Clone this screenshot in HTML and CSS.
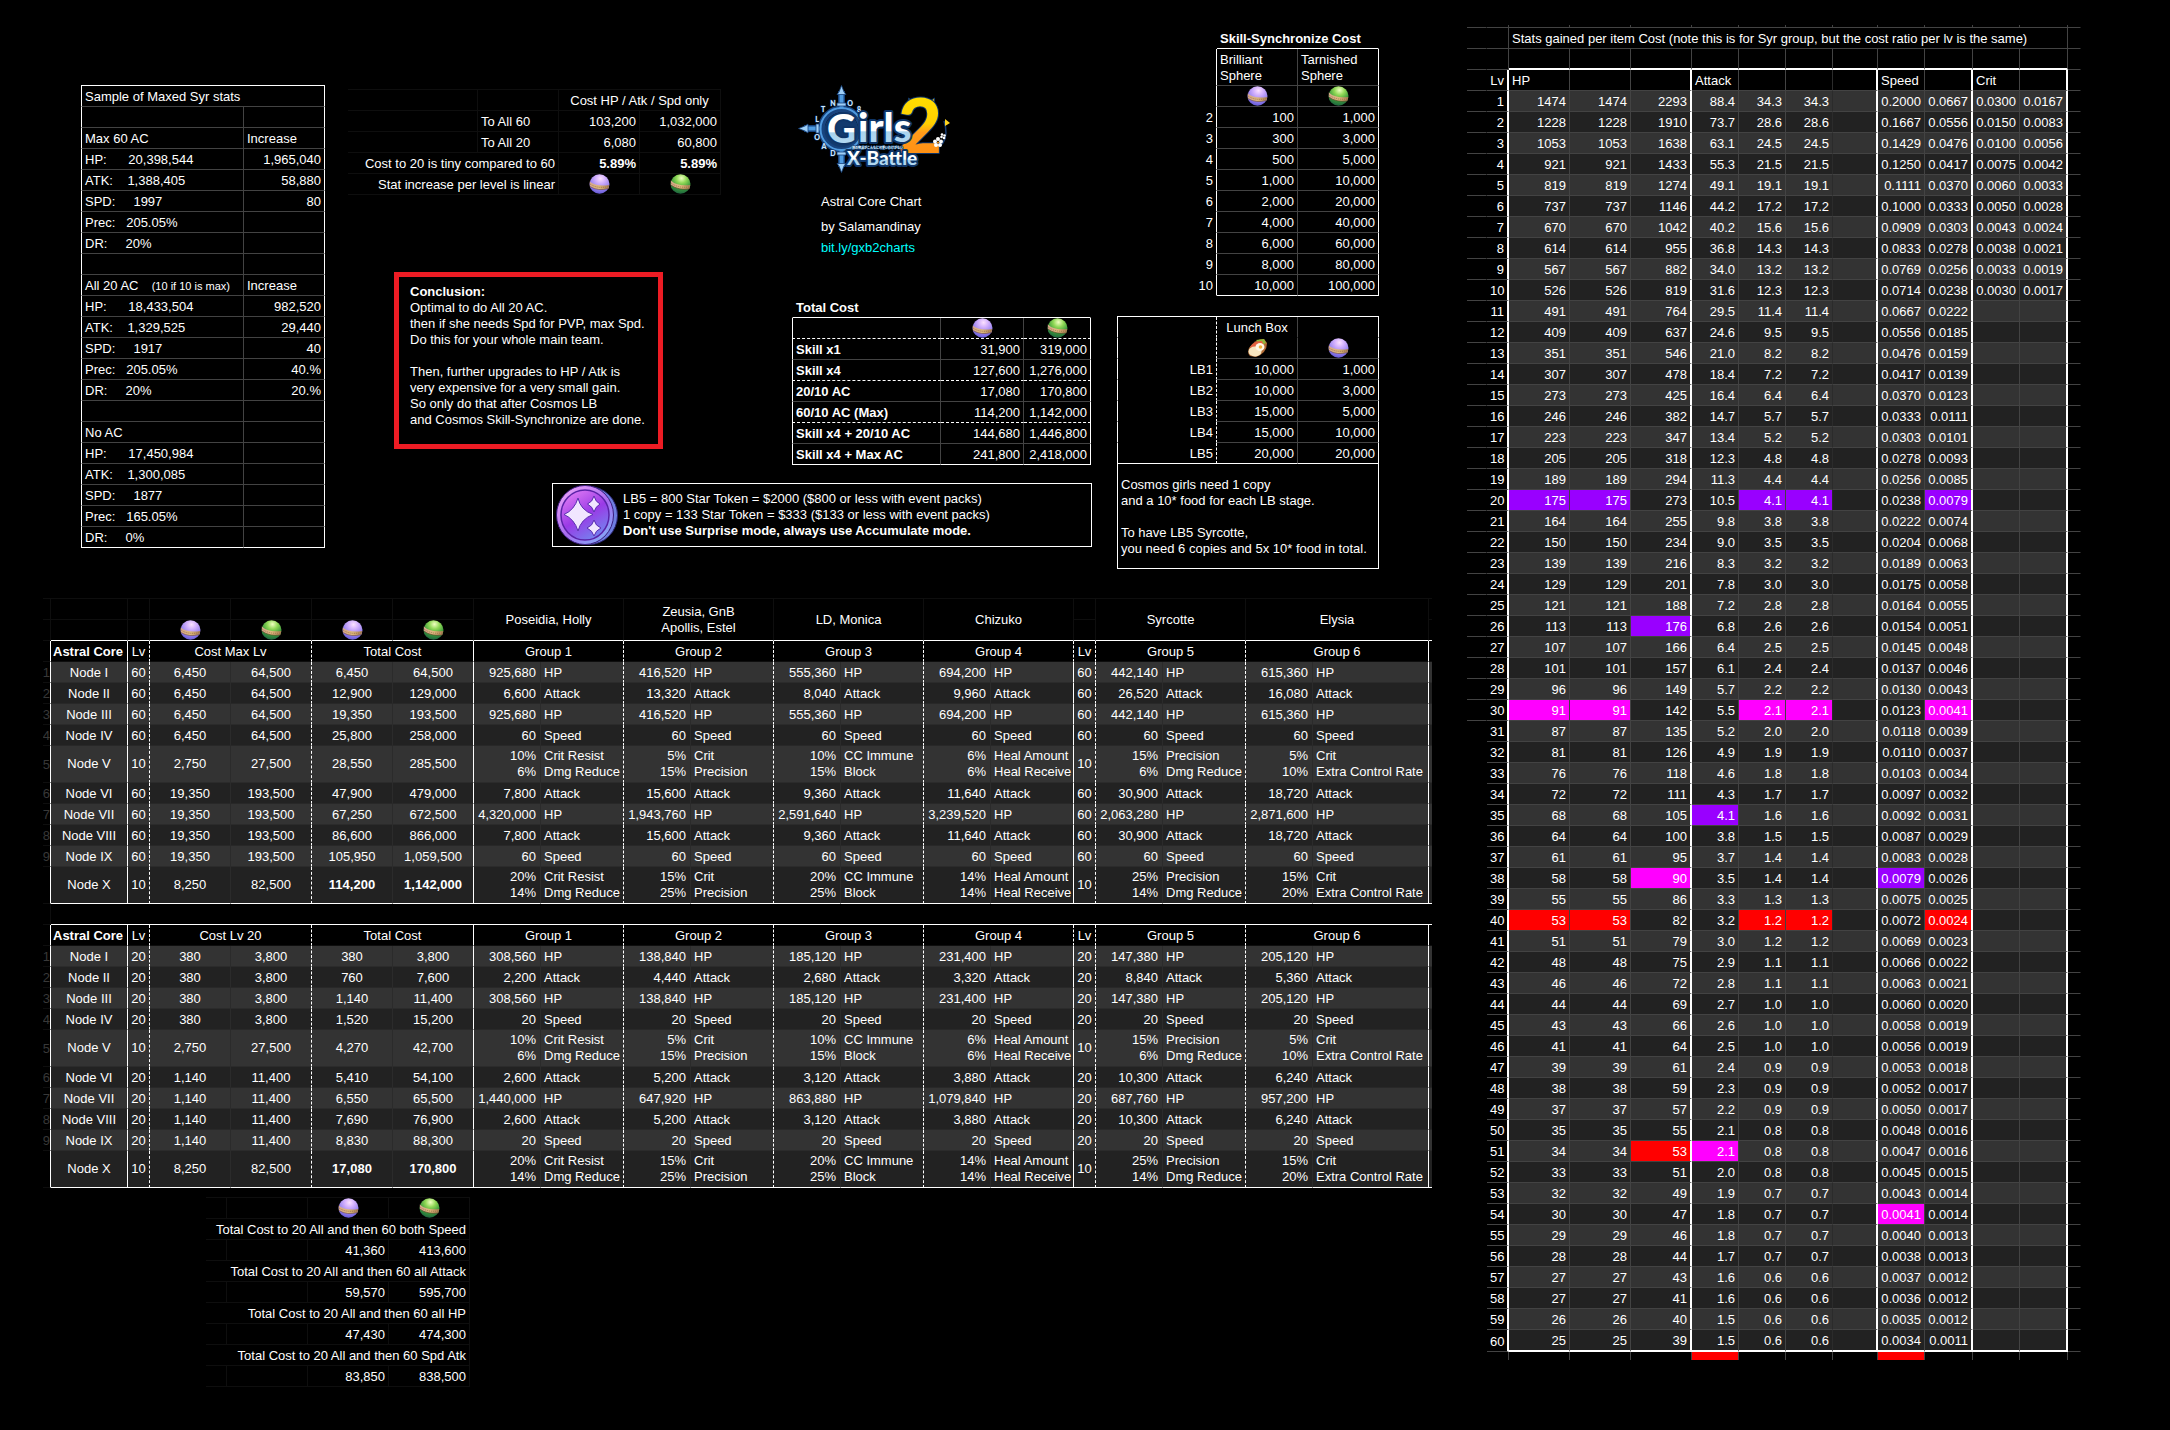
FILE: index.html
```html
<!DOCTYPE html>
<html lang="en">
<head>
<meta charset="utf-8">
<title>Girls X-Battle 2 - Astral Core Chart</title>
<link rel="stylesheet" href="styles.css">
</head>
<body>
<svg class="defs" width="0" height="0" aria-hidden="true">
  <defs>
    <radialGradient id="purple" cx="55%" cy="22%" r="85%">
      <stop offset="0" stop-color="#fbe0ff"/><stop offset=".3" stop-color="#d0aefc"/><stop offset=".65" stop-color="#9480ee"/><stop offset="1" stop-color="#5a50d0"/>
    </radialGradient>
    <radialGradient id="green" cx="55%" cy="20%" r="85%">
      <stop offset="0" stop-color="#f0ffc0"/><stop offset=".3" stop-color="#90d856"/><stop offset=".65" stop-color="#38963a"/><stop offset="1" stop-color="#1a5c40"/>
    </radialGradient>
    <linearGradient id="band" x1="0" x2="1">
      <stop offset="0" stop-color="#d8a88c"/><stop offset=".5" stop-color="#dcb87c"/><stop offset="1" stop-color="#a87c50"/>
    </linearGradient>
    <linearGradient id="coinface" x1=".2" y1="0" x2=".8" y2="1">
      <stop offset="0" stop-color="#e07cf4"/><stop offset=".5" stop-color="#9a3ae6"/><stop offset="1" stop-color="#6f8cf0"/>
    </linearGradient>
    <linearGradient id="coinrim" x1=".1" y1="0" x2=".9" y2="1">
      <stop offset="0" stop-color="#f0a4fa"/><stop offset=".55" stop-color="#a86cf0"/><stop offset="1" stop-color="#7cb4f8"/>
    </linearGradient>
    <linearGradient id="ice" x1="0" y1="0" x2="0" y2="1">
      <stop offset="0" stop-color="#fff"/><stop offset=".58" stop-color="#fff"/><stop offset=".6" stop-color="#a9d3ef"/><stop offset="1" stop-color="#b9dcf3"/>
    </linearGradient>
    <linearGradient id="gold" x1="0" y1="0" x2="0" y2="1">
      <stop offset="0" stop-color="#ffe600"/><stop offset=".5" stop-color="#ffd000"/><stop offset=".6" stop-color="#ff9a1a"/><stop offset="1" stop-color="#ff8a10"/>
    </linearGradient>
  </defs>
  <symbol id="orb-purple" viewBox="0 0 21 20">
    <ellipse cx="10.500" cy="10" rx="10" ry="9.700" fill="url(#purple)"/>
    <path d="M.7 7.500Q7 13 20.200 11L19.500 14.500Q9 17.500.9 12.500Z" fill="url(#band)"/>
    <path d="M1 10Q8 15 20 12.600" fill="none" stroke="#8a6240" stroke-width=".7" stroke-dasharray="1 1"/>
    <path d="M.9 12.500Q9 17.500 19.500 14.500" fill="none" stroke="#6a4a48" stroke-width=".6"/>
  </symbol>
  <symbol id="orb-green" viewBox="0 0 21 20">
    <ellipse cx="10.500" cy="10" rx="10" ry="9.700" fill="url(#green)"/>
    <path d="M.8 6.500Q7 12.500 20.300 11L19.300 15Q8 16.500.9 11Z" fill="url(#band)"/>
    <path d="M1 9Q8 14.500 20 13" fill="none" stroke="#8a6240" stroke-width=".7" stroke-dasharray="1 1"/>
    <path d="M.9 11Q8 16.500 19.300 15" fill="none" stroke="#4c3a20" stroke-width=".6"/>
  </symbol>
</svg>

<main class="sheet">
  <div class="calc">
    <div class="overview">

      <table class="grid stats">
        <colgroup><col class="w163"><col class="w81"></colgroup>
        <tr><th colspan="2" scope="colgroup">Sample of Maxed Syr stats</th></tr>
        <tr><td></td><td></td></tr>
        <tr><th>Max 60 AC</th><th>Increase</th></tr>
        <tr><td>HP:      20,398,544</td><td>1,965,040</td></tr>
        <tr><td>ATK:    1,388,405</td><td>58,880</td></tr>
        <tr><td>SPD:     1997</td><td>80</td></tr>
        <tr><td>Prec:   205.05%</td><td></td></tr>
        <tr><td>DR:     20%</td><td></td></tr>
        <tr><td></td><td></td></tr>
        <tr><th>All 20 AC  <small>(10 if 10 is max)</small></th><th>Increase</th></tr>
        <tr><td>HP:      18,433,504</td><td>982,520</td></tr>
        <tr><td>ATK:    1,329,525</td><td>29,440</td></tr>
        <tr><td>SPD:     1917</td><td>40</td></tr>
        <tr><td>Prec:   205.05%</td><td>40.%</td></tr>
        <tr><td>DR:     20%</td><td>20.%</td></tr>
        <tr><td></td><td></td></tr>
        <tr><th>No AC</th><td></td></tr>
        <tr><td>HP:      17,450,984</td><td></td></tr>
        <tr><td>ATK:    1,300,085</td><td></td></tr>
        <tr><td>SPD:     1877</td><td></td></tr>
        <tr><td>Prec:   165.05%</td><td></td></tr>
        <tr><td>DR:     0%</td><td></td></tr>
      </table>

      <div class="middle">
        <div class="middle-row">
          <div class="advice">
            <table class="grid compare">
              <colgroup><col class="w130"><col class="w81"><col class="w81"><col class="w81"></colgroup>
              <tr><td></td><td></td><th colspan="2" class="center">Cost HP / Atk / Spd only</th></tr>
              <tr><td></td><th>To All 60</th><td>103,200</td><td>1,032,000</td></tr>
              <tr><td></td><th>To All 20</th><td>6,080</td><td>60,800</td></tr>
              <tr><th colspan="2" class="right">Cost to 20 is tiny compared to 60</th><td><b>5.89%</b></td><td><b>5.89%</b></td></tr>
              <tr><th colspan="2" class="right">Stat increase per level is linear</th><td class="pic"><svg class="orb"><use href="#orb-purple"/></svg></td><td class="pic"><svg class="orb"><use href="#orb-green"/></svg></td></tr>
            </table>
            <section class="conclusion">
              <h2>Conclusion:</h2>
              <p>Optimal to do All 20 AC.<br>then if she needs Spd for PVP, max Spd.<br>Do this for your whole main team.</p>
              <p>Then, further upgrades to HP / Atk is<br>very expensive for a very small gain.<br>So only do that after Cosmos LB<br>and Cosmos Skill-Synchronize are done.</p>
            </section>
          </div>

          <div class="brand">
            <svg class="logo" viewBox="19 14 153 88" role="img" aria-label="Girls X-Battle 2">
              <g fill="none" stroke="#17437e" stroke-width="7">
                <circle cx="62.500" cy="58" r="20"/>
                <path d="M62.500 20V38M62.500 78V96M25 57.500H42"/>
              </g>
              <g fill="none" stroke="#4f9be0" stroke-width="2">
                <circle cx="62.500" cy="58" r="21"/>
                <path d="M62.500 22V37M62.500 79V95M26 57.500H41" stroke-width="4"/>
              </g>
              <g fill="#9fd0f8" stroke="#17437e" stroke-width=".8">
                <path d="M62.500 14.500L65 21 67 23.500H58L60 21Z"/>
                <path d="M62.500 101.500L65 95 67 92.500H58L60 95Z"/>
                <path d="M19.500 57.500L26 55 29 53V62L26 60Z"/>
                <path d="M58 32H67V35H58ZM58 81H67V84H58ZM37 53H40V62H37Z"/>
              </g>
              <g class="runes">
                <text x="80" y="41">8</text><text x="71" y="35">O</text><text x="54" y="35">N</text><text x="44" y="41">T</text>
                <text x="38" y="51">L</text><text x="38" y="69">O</text><text x="45" y="78">A</text><text x="54" y="85">D</text>
              </g>
              <circle cx="62.500" cy="59" r="17" fill="#123a6e"/>
              <path d="M145 81C163 80 171 68 165 50" fill="none" stroke="#1a3f74" stroke-width="1.500"/>
              <path d="M166 48L171 52 166 55Z" fill="#ffd51e"/>
              <path d="M129 38L129.500 27 137 32.500ZM148 32L155.500 27 155 38Z" fill="#f5c400" stroke="#0f3568" stroke-width="1"/>
              <text class="two" x="119" y="82">2</text>
              <g class="girls"><text x="48" y="72">G</text><text x="79" y="71">irls</text></g>
              <text class="motto" x="73" y="77.500">神の物語がこんなに可愛いわけがない</text>
              <text class="xbattle" x="68" y="94">X-Battle</text>
              <g fill="#fff">
                <circle cx="159" cy="68" r="2"/><circle cx="162" cy="70.500" r="2"/><circle cx="161" cy="74" r="2"/><circle cx="157" cy="74" r="2"/><circle cx="156" cy="70.500" r="2"/>
                <circle cx="163" cy="63.500" r="1.300"/><circle cx="165.500" cy="64.500" r="1.300"/><circle cx="165" cy="67" r="1.300"/><circle cx="162.500" cy="66" r="1.300"/>
              </g>
              <circle cx="159" cy="71.500" r="1" fill="#ff9a1a"/>
            </svg>
            <div class="credits">
              <p>Astral Core Chart</p>
              <p>by Salamandinay</p>
              <p><a href="https://bit.ly/gxb2charts">bit.ly/gxb2charts</a></p>
            </div>
            <table class="grid totals">
              <colgroup><col class="w149"><col class="w83"><col class="w67"></colgroup>
              <tr class="title"><th colspan="3">Total Cost</th></tr>
              <tr class="dash"><td></td><td class="pic"><svg class="orb"><use href="#orb-purple"/></svg></td><td class="pic"><svg class="orb"><use href="#orb-green"/></svg></td></tr>
              <tr><th>Skill x1</th><td>31,900</td><td>319,000</td></tr>
              <tr class="dash"><th>Skill x4</th><td>127,600</td><td>1,276,000</td></tr>
              <tr><th>20/10 AC</th><td>17,080</td><td>170,800</td></tr>
              <tr class="dash"><th>60/10 AC (Max)</th><td>114,200</td><td>1,142,000</td></tr>
              <tr><th>Skill x4 + 20/10 AC</th><td>144,680</td><td>1,446,800</td></tr>
              <tr><th>Skill x4 + Max AC</th><td>241,800</td><td>2,418,000</td></tr>
            </table>
          </div>
        </div>

        <aside class="token">
          <svg class="coin" viewBox="0 0 62 60" aria-hidden="true">
            <ellipse cx="33" cy="30.500" rx="28.500" ry="29" fill="#6f7ee0" stroke="#2a2470" stroke-width="1"/>
            <ellipse cx="29" cy="30" rx="28.500" ry="29.500" fill="url(#coinrim)" stroke="#3a1c7c" stroke-width="1"/>
            <ellipse cx="29" cy="30" rx="24" ry="25" fill="url(#coinface)" stroke="#5a22a8" stroke-width="1.500"/>
            <g fill="#f1e6ff" stroke="#5a30b0" stroke-width="1">
              <path d="M22 13Q24.500 25 37 29.500 25 34 22 46 18.500 34 8 29.500 18.500 25 22 13Z"/>
              <path d="M38 11Q39.500 17 44 19 39.500 21.500 38 27 36.500 21.500 31.500 19 36.500 17 38 11Z"/>
              <path d="M38 35Q39.500 41 45 43 39.500 45.500 38 51 36.500 45.500 31 43 36.500 41 38 35Z"/>
            </g>
          </svg>
          <p>LB5 = 800 Star Token = $2000 ($800 or less with event packs)<br>1 copy = 133 Star Token = $333 ($133 or less with event packs)<br><b>Don't use Surprise mode, always use Accumulate mode.</b></p>
        </aside>
      </div>

      <div class="costs">
        <table class="grid sync">
          <colgroup><col class="w99"><col class="w81"><col class="w81"></colgroup>
          <tr class="title"><td></td><th colspan="2">Skill-Synchronize Cost</th></tr>
          <tr class="tall"><td></td><th>Brilliant<br>Sphere</th><th>Tarnished<br>Sphere</th></tr>
          <tr><td></td><td class="pic"><svg class="orb"><use href="#orb-purple"/></svg></td><td class="pic"><svg class="orb"><use href="#orb-green"/></svg></td></tr>
          <tr><td>2</td><td>100</td><td>1,000</td></tr>
          <tr><td>3</td><td>300</td><td>3,000</td></tr>
          <tr><td>4</td><td>500</td><td>5,000</td></tr>
          <tr><td>5</td><td>1,000</td><td>10,000</td></tr>
          <tr><td>6</td><td>2,000</td><td>20,000</td></tr>
          <tr><td>7</td><td>4,000</td><td>40,000</td></tr>
          <tr><td>8</td><td>6,000</td><td>60,000</td></tr>
          <tr><td>9</td><td>8,000</td><td>80,000</td></tr>
          <tr><td>10</td><td>10,000</td><td>100,000</td></tr>
        </table>
        <table class="grid lunch">
          <colgroup><col class="w100"><col class="w81"><col class="w81"></colgroup>
          <tr class="open"><td></td><th class="center">Lunch Box</th><td></td></tr>
          <tr><td></td><td class="pic"><svg class="orb" viewBox="0 0 21 20"><path d="M2 10Q8 1 17 1L20 5Q20 15 9 19L3 18Q0 15 2 10Z" fill="#b06a35"/><path d="M9 2L17 1 19 5 14 7Z" fill="#8fb83a"/><path d="M3 9Q8 2 15 3L17 8 10 10Z" fill="#e4603f"/><ellipse cx="8" cy="13.500" rx="6.500" ry="5" fill="#f8e6c0"/><ellipse cx="13" cy="9" rx="4.500" ry="4" fill="#fff8e6"/><circle cx="13.500" cy="9" r="1.800" fill="#f2b23c"/></svg></td><td class="pic"><svg class="orb"><use href="#orb-purple"/></svg></td></tr>
          <tr><td>LB1</td><td>10,000</td><td>1,000</td></tr>
          <tr><td>LB2</td><td>10,000</td><td>3,000</td></tr>
          <tr><td>LB3</td><td>15,000</td><td>5,000</td></tr>
          <tr><td>LB4</td><td>15,000</td><td>10,000</td></tr>
          <tr class="end"><td>LB5</td><td>20,000</td><td>20,000</td></tr>
          <tr class="note"><td colspan="3">Cosmos girls need 1 copy<br>and a 10* food for each LB stage.<br><br>To have LB5 Syrcotte,<br>you need 6 copies and 5x 10* food in total.</td></tr>
        </table>
      </div>
    </div>

    <table class="grid planner" id="plan-max"></table>
    <table class="grid planner second" id="plan-20"></table>

    <table class="grid sums">
      <colgroup><col class="w21"><col class="w81"><col class="w81"><col class="w81"></colgroup>
      <tr><td></td><td></td><td class="pic"><svg class="orb"><use href="#orb-purple"/></svg></td><td class="pic"><svg class="orb"><use href="#orb-green"/></svg></td></tr>
      <tr><th colspan="4">Total Cost to 20 All and then 60 both Speed</th></tr>
      <tr><td></td><td></td><td>41,360</td><td>413,600</td></tr>
      <tr><th colspan="4">Total Cost to 20 All and then 60 all Attack</th></tr>
      <tr><td></td><td></td><td>59,570</td><td>595,700</td></tr>
      <tr><th colspan="4">Total Cost to 20 All and then 60 all HP</th></tr>
      <tr><td></td><td></td><td>47,430</td><td>474,300</td></tr>
      <tr><th colspan="4">Total Cost to 20 All and then 60 Spd Atk</th></tr>
      <tr><td></td><td></td><td>83,850</td><td>838,500</td></tr>
    </table>
  </div>

  <table class="grid gains" id="gains"></table>
</main>
<script src="chart.js"></script>
</body>
</html>
```
FILE: styles.css
```css
* { box-sizing: border-box; }

body {
  margin: 0;
  background: #000;
  color: #fff;
  font: 13px/16px "Liberation Sans", Arial, sans-serif;
}

h2, p { margin: 0; font-size: 13px; }
a { color: #0ff; text-decoration: none; }
.defs { position: absolute; }

.sheet {
  display: flex;
  align-items: flex-start;
  gap: 35px;
  padding: 25px 43px 42px;
}
.calc { flex: none; padding-top: 3px; }
.overview { display: flex; align-items: flex-start; gap: 23px; padding-left: 38px; }
.middle { margin-top: 57px; }
.middle-row { display: flex; gap: 71px; padding-right: 1px; }

/* shared spreadsheet grid */
.grid {
  flex: none;
  border-collapse: separate;
  border-spacing: 0;
  table-layout: fixed;
  width: 0;
}
.grid td, .grid th {
  height: 21px;
  padding: 2px 3px 0;
  border: 0 solid #434343;
  border-width: 0 1px 1px 0;
  font-weight: 400;
  text-align: left;
  white-space: pre;
  line-height: 16px;
}
.grid td { text-align: right; }
.grid .center { text-align: center; }
.grid .right { text-align: right; }
.grid .pic { padding: 0; }
.grid b { font-weight: 700; }
.orb { display: block; width: 21px; height: 20px; margin: 0 auto; }

.w21 { width: 21px; }
.w67 { width: 67px; }
.w81 { width: 81px; }
.w83 { width: 83px; }
.w99 { width: 99px; }
.w100 { width: 100px; }
.w130 { width: 130px; }
.w149 { width: 149px; }
.w163 { width: 163px; }

/* sample stats */
.stats { margin-top: 57px; border-top: 1px solid #fff; }
.stats tr > :first-child { border-left: 1px solid #fff; text-align: left; }
.stats tr > :last-child { border-right-color: #fff; }
.stats tr:last-child > * { border-bottom-color: #fff; }
.stats small { margin-left: 6px; font-size: 11px; }

/* cost comparison */
.compare { margin-top: 4px; border-top: 1px solid #0e0e0e; }
.compare td, .compare th { border-color: #0e0e0e; }

.conclusion {
  width: 269px;
  height: 177px;
  margin: 77px 0 0 46px;
  padding: 7px 11px;
  border: 5px solid #ed1c24;
  white-space: nowrap;
}
.conclusion p + p { margin-top: 16px; }

/* logo and credits */
.logo { display: block; overflow: visible; width: 153px; height: 88px; margin: 0 0 18px 6px; }
.logo text { font-family: "Lato", "Inter", sans-serif; font-weight: 900; paint-order: stroke; stroke: #0f3568; stroke-linejoin: round; }
.logo .runes text { font-size: 7px; fill: #cfe6fb; stroke-width: 1px; text-anchor: middle; }
.logo .girls text { font-size: 40px; fill: url(#ice); stroke-width: 4px; }
.logo .two { font-size: 76px; fill: url(#gold); stroke-width: 2px; }
.logo .xbattle { font-size: 19px; fill: url(#ice); stroke-width: 4px; }
.logo .motto { font-family: "Noto Sans CJK JP", sans-serif; font-size: 3px; fill: #dceaf8; stroke-width: 1px; }
.credits { padding-left: 29px; line-height: 21px; }
.credits p:first-child { margin-bottom: 4px; }

.totals { margin-top: 39px; }
.totals th { font-weight: 700; }
.totals tr > :first-child { border-left: 1px solid #fff; }
.totals tr > :last-child { border-right-color: #fff; }
.totals tr:last-child > * { border-bottom-color: #fff; }
.totals .dash > * { border-bottom: 1px dashed #fff; }
.totals .title > th { border-color: #000 #000 #fff; }

.token {
  display: flex;
  align-items: center;
  gap: 5px;
  width: 540px;
  height: 64px;
  margin: 18px 0 0 auto;
  padding-left: 3px;
  border: 1px solid #fff;
  white-space: nowrap;
}
.coin { width: 62px; height: 60px; }

/* synchronize cost and lunch box */
.costs { margin-left: 2px; }
.sync .tall > * { height: 37px; }
.sync tr > :first-child { border-color: #000 #fff #000 #000; }
.sync tr > :last-child { border-right-color: #fff; }
.sync tr:last-child > * { border-bottom-color: #fff; }
.sync tr:last-child > :first-child { border-bottom-color: #000; }
.sync .title > th { border-color: #000 #000 #fff; font-weight: 700; }
.sync .title > td { border-color: #000; }

.lunch { margin-top: 20px; border-top: 1px solid #fff; }
.costs .lunch, .costs .sync { margin-left: auto; }
.lunch tr > :first-child { border-left: 1px solid #fff; border-right: 1px dashed #fff; border-bottom-color: #000; }
.lunch tr > :last-child { border-right: 1px solid #fff; }
.lunch .open > * { border-bottom-color: #000; }
.lunch tr.end > * { border-bottom-color: #fff; }
.lunch tr.note > td { height: 105px; border-right: 1px solid #fff; border-bottom-color: #fff; text-align: left; }

/* astral core planner */
.planner { margin-top: 29px; border-top: 1px solid #0e0e0e; }
.planner.second { margin-top: 0; border-top: 0; }
.planner td, .planner th { border-color: #0e0e0e; text-align: center; padding: 2px 4px 0; }
.planner tr.names > *, .planner tr.icons > * { padding-top: 0; border-right-color: #0e0e0e; }
.planner tr.rule > *, .planner tr.names > [rowspan] { border-bottom-color: #fff; }
.planner .strong { font-weight: 700; padding: 2px 2px 0; text-align: left; }
.planner .solid { border-right-color: #fff; }
.planner .dashed { border-right: 1px dashed #fff; }
.planner .num { text-align: right; }
.planner .name { text-align: left; padding-left: 3px; padding-right: 0; }
.planner .lv { padding: 2px 3px 0; }
.planner .odd > * { background: #333; border-bottom-color: #2b2b2b; }
.planner .even > * { background: #222; border-bottom-color: #282828; }
.planner .odd > .thin, .planner .even > .thin { border-right-color: #2b2b2b; }
.planner .double > * { height: 37px; padding-top: 0; }
.planner .double:last-child > * { border-bottom-color: #fff; }
.planner tr > .tail { padding: 0; border-right: 0; }
.planner tr > td.edge {
  padding: 2px 0 0;
  border-right-color: #fff;
  background: #000;
  color: #383838;
  direction: rtl;
  overflow: hidden;
}
.planner tr:nth-child(n) > td.edge { border-bottom-color: #0e0e0e; }
.planner tr.names > td.edge, .planner tr.rule > td.edge { border-right-color: #0e0e0e; }

.sums { margin: 9px 0 0 163px; border-top: 1px solid #0e0e0e; }
.sums td, .sums th { border-color: #0e0e0e; text-align: right; }

/* stats gained per item cost */
.gains td, .gains th { text-align: right; }
.gains .left { text-align: left; }
.gains .thick { border-right: 2px solid #fff; }
.gains .odd > .v { background: #333; }
.gains .even > .v { background: #222; }
.gains .f { border-right-color: #2b2b2b; }
.gains .gut { border-right-color: #000; }
.gains .above > .v { border-bottom: 2px solid #fff; }
.gains .last > td, .gains .last > th { height: 22px; }
.gains .last > .v { border-bottom: 2px solid #fff; }
.gains .tick > td { height: 3px; padding: 0; }
.gains .foot > td { height: 8px; padding: 0; border-bottom: 0; }
.gains .foot > .red { background: #f00; }
.gains tr > .v.purple { background: #90f; }
.gains tr > .v.pink { background: #f0f; }
.gains tr > .v.red { background: #f00; }
```
FILE: chart.js
```js
const cols = widths => '<colgroup>' + widths.map(w => `<col style="width:${w}px">`).join('') + '</colgroup>';
const orb = kind => `<svg class="orb"><use href="#orb-${kind}"/></svg>`;

/* ---------- Astral core planner ---------- */
const nodes = ['I', 'II', 'III', 'IV', 'V', 'VI', 'VII', 'VIII', 'IX', 'X'];
const kinds = ['HP', 'Attack', 'HP', 'Speed', '', 'Attack', 'HP', 'Attack', 'Speed', ''];
const special = {
  4: [['10%', 'Crit Resist', '6%', 'Dmg Reduce'], ['5%', 'Crit', '15%', 'Precision'], ['10%', 'CC Immune', '15%', 'Block'],
      ['6%', 'Heal Amount', '6%', 'Heal Receive'], ['15%', 'Precision', '6%', 'Dmg Reduce'], ['5%', 'Crit', '10%', 'Extra Control Rate']],
  9: [['20%', 'Crit Resist', '14%', 'Dmg Reduce'], ['15%', 'Crit', '25%', 'Precision'], ['20%', 'CC Immune', '25%', 'Block'],
      ['14%', 'Heal Amount', '14%', 'Heal Receive'], ['25%', 'Precision', '14%', 'Dmg Reduce'], ['15%', 'Crit', '20%', 'Extra Control Rate']]
};
const plans = {
  'plan-max': {
    level: 60, label: 'Cost Max Lv', heroes: true,
    costs: ['6,450 64,500 6,450 64,500', '6,450 64,500 12,900 129,000', '6,450 64,500 19,350 193,500', '6,450 64,500 25,800 258,000',
      '2,750 27,500 28,550 285,500', '19,350 193,500 47,900 479,000', '19,350 193,500 67,250 672,500', '19,350 193,500 86,600 866,000',
      '19,350 193,500 105,950 1,059,500', '8,250 82,500 114,200 1,142,000'],
    hp: ['925,680', '416,520', '555,360', '694,200', '442,140', '615,360'],
    atk: ['6,600', '13,320', '8,040', '9,960', '26,520', '16,080'],
    atk2: ['7,800', '15,600', '9,360', '11,640', '30,900', '18,720'],
    hp2: ['4,320,000', '1,943,760', '2,591,640', '3,239,520', '2,063,280', '2,871,600']
  },
  'plan-20': {
    level: 20, label: 'Cost Lv 20', heroes: false,
    costs: ['380 3,800 380 3,800', '380 3,800 760 7,600', '380 3,800 1,140 11,400', '380 3,800 1,520 15,200',
      '2,750 27,500 4,270 42,700', '1,140 11,400 5,410 54,100', '1,140 11,400 6,550 65,500', '1,140 11,400 7,690 76,900',
      '1,140 11,400 8,830 88,300', '8,250 82,500 17,080 170,800'],
    hp: ['308,560', '138,840', '185,120', '231,400', '147,380', '205,120'],
    atk: ['2,200', '4,440', '2,680', '3,320', '8,840', '5,360'],
    atk2: ['2,600', '5,200', '3,120', '3,880', '10,300', '6,240'],
    hp2: ['1,440,000', '647,920', '863,880', '1,079,840', '687,760', '957,200']
  }
};
const ends = ['dashed', 'dashed', 'dashed', 'solid', 'dashed', 'solid'];

function planner(id) {
  const p = plans[id];
  let h = cols([8, 77, 22, 81, 81, 81, 81, 67, 83, 67, 83, 67, 83, 67, 83, 22, 67, 83, 67, 116, 3]);
  if (p.heroes) {
    const hero = t => `<th colspan="2" rowspan="2">${t}</th>`;
    h += '<tr class="names"><td class="edge"></td>' + '<td></td>'.repeat(6)
      + ['Poseidia, Holly', 'Zeusia, GnB<br>Apollis, Estel', 'LD, Monica', 'Chizuko'].map(hero).join('')
      + '<td></td>' + ['Syrcotte', 'Elysia'].map(hero).join('') + '<td class="tail"></td></tr>';
    h += `<tr class="icons rule"><td class="edge"></td><td></td><td></td><td>${orb('purple')}</td><td>${orb('green')}</td><td>${orb('purple')}</td><td>${orb('green')}</td><td></td><td class="tail"></td></tr>`;
  } else {
    h += '<tr class="rule lead"><td class="edge"></td><td colspan="20" class="tail"></td></tr>';
  }
  const head = (n, cls) => `<th colspan="2" class="${cls}">Group ${n}</th>`;
  h += `<tr><td class="edge"></td><th class="strong solid">Astral Core</th><th class="lv dashed">Lv</th><th colspan="2" class="dashed">${p.label}</th><th colspan="2" class="solid">Total Cost</th>`
    + head(1, 'dashed') + head(2, 'dashed') + head(3, 'dashed') + head(4, 'dashed') + '<th class="lv dashed">Lv</th>' + head(5, 'dashed') + head(6, 'solid') + '<td class="tail"></td></tr>';
  nodes.forEach((n, i) => {
    const two = special[i];
    const values = [p.hp, p.atk, p.hp, null, null, p.atk2, p.hp2, p.atk2, null][i];
    const lv = `<td class="lv dashed">${two ? 10 : p.level}</td>`;
    const c = p.costs[i].split(' ').map((v, k) => i === 9 && k > 1 ? `<b>${v}</b>` : v);
    h += `<tr class="${i % 2 ? 'even' : 'odd'}${two ? ' double' : ''}"><td class="edge">${i < 9 ? i + 1 : ''}</td><th class="solid">Node ${n}</th>${lv}`
      + `<td class="thin">${c[0]}</td><td class="dashed">${c[1]}</td><td class="thin">${c[2]}</td><td class="solid">${c[3]}</td>`;
    for (let g = 0; g < 6; g++) {
      if (g === 4) h += lv;
      const num = two ? two[g][0] + '<br>' + two[g][2] : values ? values[g] : p.level;
      const name = two ? two[g][1] + '<br>' + two[g][3] : kinds[i];
      h += `<td class="num thin">${num}</td><td class="name ${ends[g]}">${name}</td>`;
    }
    h += '<td class="tail"></td></tr>';
  });
  document.getElementById(id).innerHTML = h;
}
Object.keys(plans).forEach(planner);

/* ---------- Stats gained per item cost: HP, HP (3rd), Attack, Attack (2nd), Speed, Speed (2nd), Crit ---------- */
const gains = `1474 2293 88.4 34.3 0.2000 0.0667 0.0300 0.0167
1228 1910 73.7 28.6 0.1667 0.0556 0.0150 0.0083
1053 1638 63.1 24.5 0.1429 0.0476 0.0100 0.0056
921 1433 55.3 21.5 0.1250 0.0417 0.0075 0.0042
819 1274 49.1 19.1 0.1111 0.0370 0.0060 0.0033
737 1146 44.2 17.2 0.1000 0.0333 0.0050 0.0028
670 1042 40.2 15.6 0.0909 0.0303 0.0043 0.0024
614 955 36.8 14.3 0.0833 0.0278 0.0038 0.0021
567 882 34.0 13.2 0.0769 0.0256 0.0033 0.0019
526 819 31.6 12.3 0.0714 0.0238 0.0030 0.0017
491 764 29.5 11.4 0.0667 0.0222
409 637 24.6 9.5 0.0556 0.0185
351 546 21.0 8.2 0.0476 0.0159
307 478 18.4 7.2 0.0417 0.0139
273 425 16.4 6.4 0.0370 0.0123
246 382 14.7 5.7 0.0333 0.0111
223 347 13.4 5.2 0.0303 0.0101
205 318 12.3 4.8 0.0278 0.0093
189 294 11.3 4.4 0.0256 0.0085
175 273 10.5 4.1 0.0238 0.0079
164 255 9.8 3.8 0.0222 0.0074
150 234 9.0 3.5 0.0204 0.0068
139 216 8.3 3.2 0.0189 0.0063
129 201 7.8 3.0 0.0175 0.0058
121 188 7.2 2.8 0.0164 0.0055
113 176 6.8 2.6 0.0154 0.0051
107 166 6.4 2.5 0.0145 0.0048
101 157 6.1 2.4 0.0137 0.0046
96 149 5.7 2.2 0.0130 0.0043
91 142 5.5 2.1 0.0123 0.0041
87 135 5.2 2.0 0.0118 0.0039
81 126 4.9 1.9 0.0110 0.0037
76 118 4.6 1.8 0.0103 0.0034
72 111 4.3 1.7 0.0097 0.0032
68 105 4.1 1.6 0.0092 0.0031
64 100 3.8 1.5 0.0087 0.0029
61 95 3.7 1.4 0.0083 0.0028
58 90 3.5 1.4 0.0079 0.0026
55 86 3.3 1.3 0.0075 0.0025
53 82 3.2 1.2 0.0072 0.0024
51 79 3.0 1.2 0.0069 0.0023
48 75 2.9 1.1 0.0066 0.0022
46 72 2.8 1.1 0.0063 0.0021
44 69 2.7 1.0 0.0060 0.0020
43 66 2.6 1.0 0.0058 0.0019
41 64 2.5 1.0 0.0056 0.0019
39 61 2.4 0.9 0.0053 0.0018
38 59 2.3 0.9 0.0052 0.0017
37 57 2.2 0.9 0.0050 0.0017
35 55 2.1 0.8 0.0048 0.0016
34 53 2.1 0.8 0.0047 0.0016
33 51 2.0 0.8 0.0045 0.0015
32 49 1.9 0.7 0.0043 0.0014
30 47 1.8 0.7 0.0041 0.0014
29 46 1.8 0.7 0.0040 0.0013
28 44 1.7 0.7 0.0038 0.0013
27 43 1.6 0.6 0.0037 0.0012
27 41 1.6 0.6 0.0036 0.0012
26 40 1.5 0.6 0.0035 0.0012
25 39 1.5 0.6 0.0034 0.0011`.split('\n').map(r => r.split(' '));

/* level -> { column: highlight } */
const marks = {
  20: { 0: 'purple', 1: 'purple', 4: 'purple', 5: 'purple', 8: 'purple' },
  26: { 2: 'purple' },
  30: { 0: 'pink', 1: 'pink', 4: 'pink', 5: 'pink', 8: 'pink' },
  35: { 3: 'purple' },
  38: { 2: 'pink', 7: 'purple' },
  40: { 0: 'red', 1: 'red', 4: 'red', 5: 'red', 8: 'red' },
  51: { 2: 'red', 3: 'pink' },
  54: { 7: 'pink' }
};
const edges = { 2: 'thick', 5: 'f', 6: 'thick', 8: 'thick', 10: 'thick' };
const cell = (v, i, extra) => `<td class="v ${edges[i] || ''} ${extra || ''}">${v}</td>`;
const plain = n => '<td></td>'.repeat(n);

let g = cols([20, 22, 61, 61, 61, 47, 47, 47, 45, 47, 48, 47, 48, 13]);
g += `<tr class="tick"><td class="gut"></td>${plain(12)}<td class="gut"></td></tr>`;
g += `<tr><td class="gut"></td><td></td><th class="left" colspan="11">Stats gained per item Cost (note this is for Syr group, but the cost ratio per lv is the same)</th><td class="gut"></td></tr>`;
g += `<tr class="above"><td class="gut"></td><td></td>${'<td class="v"></td>'.repeat(11)}<td class="gut"></td></tr>`;
g += '<tr><td class="gut"></td><th class="thick">Lv</th>'
  + ['HP', '', '', 'Attack', '', '', '', 'Speed', '', 'Crit', ''].map((t, i) => `<th class="left ${edges[i] || ''}">${t}</th>`).join('') + '<td class="gut"></td></tr>';
gains.forEach((r, k) => {
  const lv = k + 1;
  const m = marks[lv] || {};
  const row = [r[0], r[0], r[1], r[2], r[3], r[3], '', r[4], r[5], r[6] || '', r[7] || ''];
  const gut = lv > 30 ? '<td class="gut" style="border-bottom-color:#000"></td>' : '<td class="gut"></td>';
  g += `<tr class="${lv % 2 ? 'odd' : 'even'}${lv === 60 ? ' last' : ''}">${gut}<th class="thick">${lv}</th>`
    + row.map((v, i) => cell(v, i, m[i])).join('') + '<td class="gut"></td></tr>';
});
g += `<tr class="foot"><td class="gut"></td>${plain(4)}<td class="red"></td>${plain(3)}<td class="red"></td>${plain(3)}<td class="gut"></td></tr>`;
document.getElementById('gains').innerHTML = g;
```
